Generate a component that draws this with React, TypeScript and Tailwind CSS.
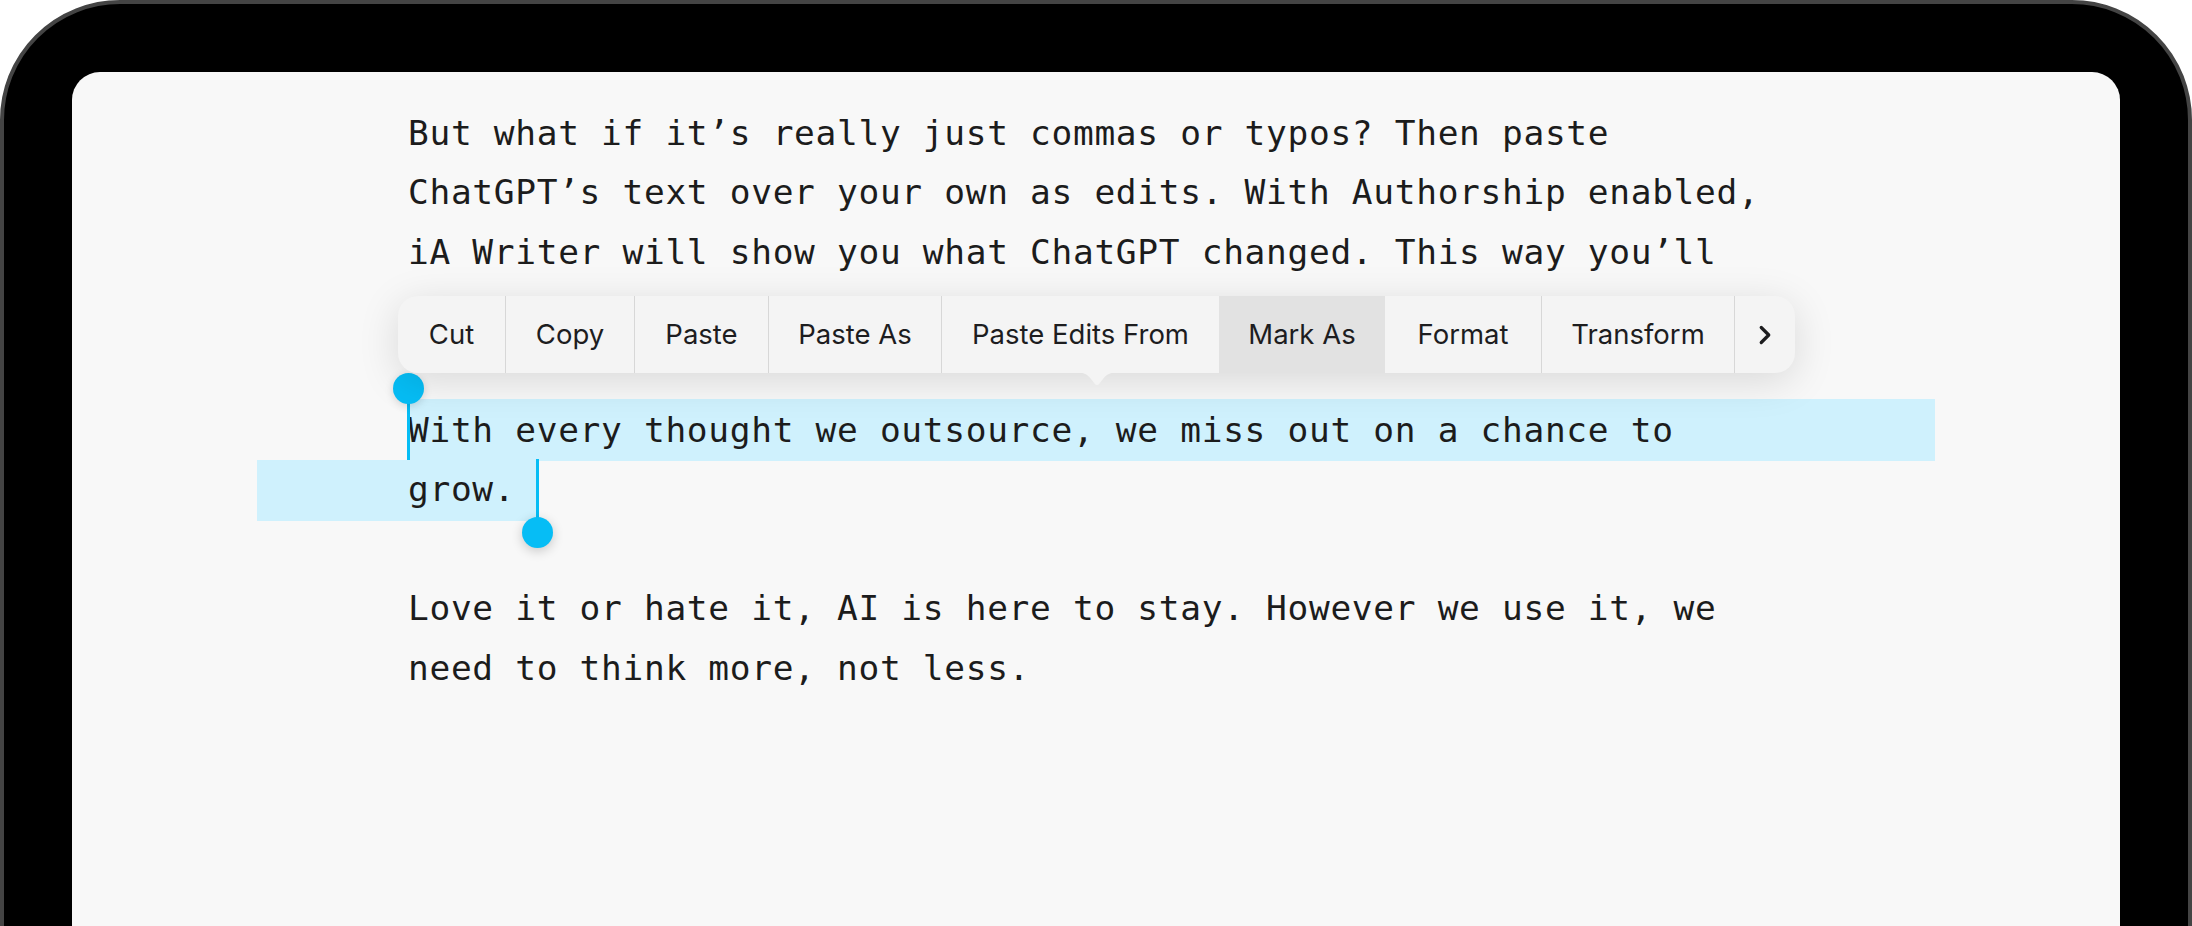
import { ChevronRight } from 'lucide-react'

const mono = { fontFamily: '"DejaVu Sans Mono", "Liberation Mono", monospace' }

const menuItems: { label: string; width: string; active?: boolean }[] = [
  { label: 'Cut', width: 'w-[107px]' },
  { label: 'Copy', width: 'w-[129px]' },
  { label: 'Paste', width: 'w-[134px]' },
  { label: 'Paste As', width: 'w-[173px]' },
  { label: 'Paste Edits From', width: 'w-[278px]' },
  { label: 'Mark As', width: 'w-[166px]', active: true },
  { label: 'Format', width: 'w-[156px]' },
  { label: 'Transform', width: 'w-[193px]' },
]

function Line({ text = '' }: { text?: string }) {
  return <div className="h-[59.4px] leading-[59.4px] whitespace-pre">{text}</div>
}

function EditMenu() {
  return (
    <div className="absolute left-[326px] top-[224px] z-20">
      <div
        className="flex h-[77px] w-[1397px] overflow-hidden rounded-[20px] bg-[#f4f4f4] text-[27.5px] text-[#1d1d1f] shadow-[0_8px_40px_rgba(0,0,0,0.13)]"
        style={{ fontFamily: 'Inter, "Noto Sans", sans-serif' }}
      >
        {menuItems.map((item, i) => {
          const prevActive = i > 0 && menuItems[i - 1].active
          const sep = i > 0 && !item.active && !prevActive
          return (
            <div
              key={item.label}
              className={`flex h-full items-center justify-center ${item.width} ${
                item.active ? 'bg-[#e2e2e2]' : ''
              } ${sep ? 'border-l border-[#d7d7d7]' : ''}`}
            >
              {item.label}
            </div>
          )
        })}
        <div className="flex h-full w-[61px] items-center justify-center border-l border-[#d7d7d7]">
          <ChevronRight size={30} strokeWidth={2.6} className="text-[#1d1d1f]" />
        </div>
      </div>
      {/* little pointer under the menu */}
      <svg
        className="absolute left-[677px] top-[76px]"
        width="44"
        height="14"
        viewBox="0 0 44 14"
      >
        <path
          d="M0 0 C8 0 12 2 16 7 L19.5 11.5 Q22 14.5 24.5 11.5 L28 7 C32 2 36 0 44 0 Z"
          fill="#f4f4f4"
        />
      </svg>
    </div>
  )
}

export default function App() {
  return (
    <div className="h-[926px] w-[2192px] overflow-hidden bg-white">
      <div className="h-[1200px] rounded-t-[120px] border-[4px] border-[#444] bg-black p-[68px]">
        <div className="relative h-full rounded-t-[28px] bg-[#f8f8f8]">
          <div
            className="pl-[336px] pt-[32px] text-[34.5px] tracking-[0.68px] text-[#1c1c1c]"
            style={mono}
          >
            <Line text="But what if it’s really just commas or typos? Then paste" />
            <Line text="ChatGPT’s text over your own as edits. With Authorship enabled," />
            <Line text="iA Writer will show you what ChatGPT changed. This way you’ll" />
            <Line />
            <Line />

            {/* selected line 1 */}
            <div className="relative h-[59.4px] leading-[59.4px] whitespace-pre">
              <div className="absolute left-0 top-[-2px] h-[62px] w-[1527px] bg-[#cff1fd]" />
              <span className="relative">With every thought we outsource, we miss out on a chance to</span>
              <div className="absolute left-[-1.5px] top-[-12px] h-[72px] w-[3px] bg-[#06bdf5]" />
              <div className="absolute left-[-15.5px] top-[-27.5px] h-[31px] w-[31px] rounded-full bg-[#06bdf5] shadow-[0_2px_8px_rgba(0,0,0,0.15)]" />
            </div>

            {/* selected line 2 */}
            <div className="relative h-[59.4px] leading-[59.4px] whitespace-pre">
              <div className="absolute left-[-151px] top-0 h-[60.5px] w-[280px] bg-[#cff1fd]" />
              <span className="relative">grow.</span>
              <div className="absolute left-[127.5px] top-[-1px] h-[73px] w-[3px] bg-[#06bdf5]" />
              <div className="absolute left-[113.5px] top-[56.5px] h-[31px] w-[31px] rounded-full bg-[#06bdf5] shadow-[0_3px_12px_rgba(0,0,0,0.2)]" />
            </div>

            <Line />
            <Line text="Love it or hate it, AI is here to stay. However we use it, we" />
            <Line text="need to think more, not less." />
          </div>

          <EditMenu />
        </div>
      </div>
    </div>
  )
}
